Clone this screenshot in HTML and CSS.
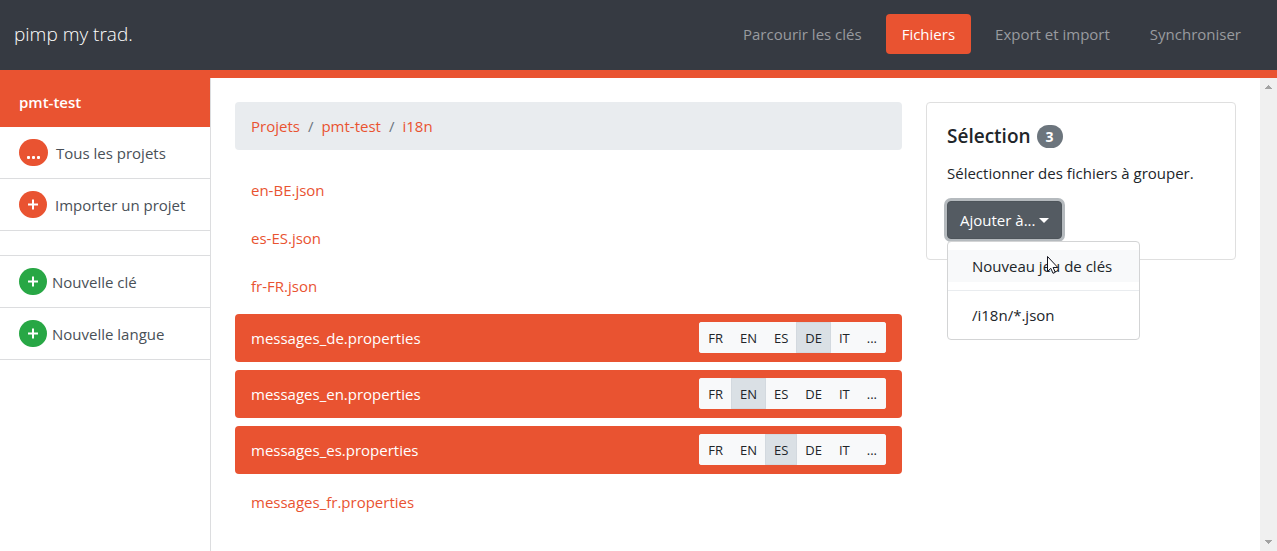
FILE: index.html
```html
<!DOCTYPE html>
<html lang="fr">
<head>
<meta charset="utf-8">
<meta name="viewport" content="width=device-width, initial-scale=1">
<title>pimp my trad.</title>
<link rel="stylesheet" href="styles.css">
</head>
<body>
<header class="topbar">
  <a class="brand" href="#">pimp my trad.</a>
  <nav class="topnav">
    <a class="topnav-link" href="#">Parcourir les clés</a>
    <a class="topnav-link active" href="#">Fichiers</a>
    <a class="topnav-link" href="#">Export et import</a>
    <a class="topnav-link" href="#">Synchroniser</a>
  </nav>
</header>
<div class="layout">
  <aside class="sidebar">
    <a class="project" href="#">pmt-test</a>
    <a class="side-link" href="#"><span class="pill dots"><svg width="15" height="4" viewBox="0 0 15 4" aria-hidden="true"><rect x="1" y="0" width="3" height="3" rx="1"/><rect x="6" y="0" width="3" height="3" rx="1"/><rect x="11" y="0" width="3" height="3" rx="1"/></svg></span>Tous les projets</a>
    <a class="side-link" href="#"><span class="pill"><svg width="10" height="11" viewBox="0 0 10 11" aria-hidden="true"><path d="M4 0.500h2v4h4v2H6v4H4v-4H0v-2h4z"/></svg></span>Importer un projet</a>
    <div class="side-gap"></div>
    <a class="side-link tight" href="#"><span class="pill green"><svg width="10" height="11" viewBox="0 0 10 11" aria-hidden="true"><path d="M4 0.500h2v4h4v2H6v4H4v-4H0v-2h4z"/></svg></span>Nouvelle clé</a>
    <a class="side-link tight" href="#"><span class="pill green"><svg width="10" height="11" viewBox="0 0 10 11" aria-hidden="true"><path d="M4 0.500h2v4h4v2H6v4H4v-4H0v-2h4z"/></svg></span>Nouvelle langue</a>
  </aside>
  <main class="content">
    <section class="browser">
      <nav class="breadcrumb">
        <a href="#">Projets</a><span>/</span><a href="#">pmt-test</a><span>/</span><a href="#">i18n</a>
      </nav>
      <div class="files">
        <div class="file"><a href="#">en-BE.json</a></div>
        <div class="file"><a href="#">es-ES.json</a></div>
        <div class="file"><a href="#">fr-FR.json</a></div>
        <div class="file selected"><a href="#">messages_de.properties</a>
          <div class="langs"><button>FR</button><button>EN</button><button>ES</button><button class="on">DE</button><button>IT</button><button>...</button></div></div>
        <div class="file selected"><a href="#">messages_en.properties</a>
          <div class="langs"><button>FR</button><button class="on">EN</button><button>ES</button><button>DE</button><button>IT</button><button>...</button></div></div>
        <div class="file selected"><a href="#">messages_es.properties</a>
          <div class="langs"><button>FR</button><button>EN</button><button class="on">ES</button><button>DE</button><button>IT</button><button>...</button></div></div>
        <div class="file"><a href="#">messages_fr.properties</a></div>
      </div>
    </section>
    <section class="card">
      <h5 class="card-title">Sélection <span class="count">3</span></h5>
      <p class="card-text">Sélectionner des fichiers à grouper.</p>
      <div class="dropdown">
        <button class="toggle" aria-expanded="true">Ajouter à...<span class="caret"></span></button>
        <div class="menu">
          <a class="menu-item hover" href="#">Nouveau jeu de clés</a>
          <hr class="divider">
          <a class="menu-item" href="#">/i18n/*.json</a>
          <svg class="cursor" width="13" height="20" viewBox="0 0 13 20" aria-hidden="true"><path d="M1.500 1.500v15l3.300-3.200 2.200 5 2.300-1-2.200-4.800h4.700z"/></svg>
        </div>
      </div>
    </section>
  </main>
  <div class="scrollbar" aria-hidden="true">
    <svg width="7" height="4" viewBox="0 0 7 4" shape-rendering="crispEdges"><path d="M3 0h1v1h1v1h1v1h1v1H0V3h1V2h1V1h1z"/></svg>
    <svg width="7" height="4" viewBox="0 0 7 4" shape-rendering="crispEdges"><path d="M0 0h7v1H6v1H5v1H4v1H3V3H2V2H1V1H0z"/></svg>
  </div>
</div>
</body>
</html>
```
FILE: styles.css
```css
* { box-sizing: border-box; }
body {
  margin: 0;
  min-height: 100vh;
  display: flex;
  flex-direction: column;
  font: 15px/24px "Open Sans", "Noto Sans", sans-serif;
  color: #212529;
  background: #fff;
}
a { color: #e95331; text-decoration: none; }
button { font-family: inherit; cursor: pointer; }

.topbar {
  display: flex;
  align-items: center;
  justify-content: space-between;
  height: 78px;
  padding: 0 20px 2px 14px;
  background: #363a42;
  border-bottom: 8px solid #e95331;
}
.brand { font-size: 19px; font-weight: 300; color: #fff; }
.topnav { display: flex; gap: 8px; }
.topnav-link { padding: 8px 16px; border-radius: 4px; color: #999b9f; }
.topnav-link.active { background: #e95331; color: #fff; }

.layout { flex: 1; display: flex; }
.sidebar { width: 211px; flex: none; border-right: 1px solid #dcdddf; }
.project {
  display: block;
  padding: 12px 19px 13px;
  background: #e95331;
  color: #fff;
  font-weight: 600;
}
.side-link {
  display: flex;
  align-items: center;
  gap: 8px;
  height: 52px;
  padding: 0 19px;
  border-bottom: 1px solid #dcdddf;
  color: #495057;
  white-space: nowrap;
}
.side-link.tight { gap: 5px; }
.side-gap { height: 25px; border-bottom: 1px solid #dcdddf; }
.pill {
  display: flex;
  align-items: center;
  justify-content: center;
  width: 28px;
  height: 27px;
  border-radius: 14px;
  background: #e95331;
}
.pill.dots { width: 29px; padding-top: 10px; }
.pill.green { background: #28a745; }
.pill svg { fill: #fff; }

.content {
  flex: 1;
  min-width: 0;
  display: grid;
  grid-template-columns: minmax(0, 1fr) 310px;
  align-items: start;
  gap: 24px;
  padding: 24px;
}
.breadcrumb {
  display: flex;
  gap: 8px;
  padding: 12px 16px;
  margin-bottom: 16px;
  border-radius: 4px;
  background: #e9ecef;
  color: #6c757d;
}
.file {
  display: flex;
  align-items: center;
  justify-content: space-between;
  height: 48px;
  padding: 0 16px;
  border-radius: 4px;
}
.files { display: flex; flex-direction: column; }
.file.selected { margin: 4px 0; background: #e95331; }
.file.selected a { color: #fff; }
.langs { display: flex; margin-bottom: 1px; border-radius: 3px; overflow: hidden; }
.langs button {
  height: 31px;
  padding: 0 8px;
  border: 1px solid #f8f9fa;
  background: #f8f9fa;
  color: #212529;
  font-size: 13px;
}
.langs button + button { margin-left: -1px; }
.langs .on { position: relative; background: #dae0e5; border-color: #d3d9df; }

.card {
  padding: 20px;
  border: 1px solid #dfdfdf;
  border-radius: 4px;
}
.card-title {
  display: flex;
  align-items: center;
  gap: 6px;
  margin: 0 0 12px;
  font-size: 19px;
  line-height: 26px;
  font-weight: 600;
}
.count {
  padding: 0 9px;
  border-radius: 12px;
  background: #6c757d;
  color: #fff;
  font-size: 14px;
  line-height: 23px;
  font-weight: 700;
}
.card-text { margin: 0 0 16px; }
.dropdown { position: relative; width: max-content; }
.toggle {
  display: flex;
  align-items: center;
  gap: 4px;
  height: 38px;
  padding: 0 12px;
  border: 1px solid #4e555b;
  border-radius: 4px;
  background: #545b62;
  box-shadow: 0 0 0 3px #b5babe;
  color: #fff;
  font-size: 15px;
}
.caret { border: 5px solid transparent; border-top-color: #fff; border-bottom: 0; }
.menu {
  position: absolute;
  top: 40px;
  left: 0;
  min-width: 193px;
  padding: 8px 0;
  border: 1px solid #d3d4d5;
  border-radius: 4px;
  background: #fff;
}
.menu-item { display: block; padding: 4px 24px; color: #212529; white-space: nowrap; }
.menu-item.hover { background: #f8f9fa; }
.divider { margin: 8px 0; border: 0; border-top: 1px solid #e9ecef; }
.cursor { position: absolute; left: 98px; top: 13px; fill: #fff; stroke: #15151f; }

.scrollbar {
  display: flex;
  flex-direction: column;
  align-items: center;
  justify-content: space-between;
  width: 17px;
  padding: 7px 0;
  background: #f0f0f0;
}
.scrollbar svg { fill: #a3a3a3; }
```
